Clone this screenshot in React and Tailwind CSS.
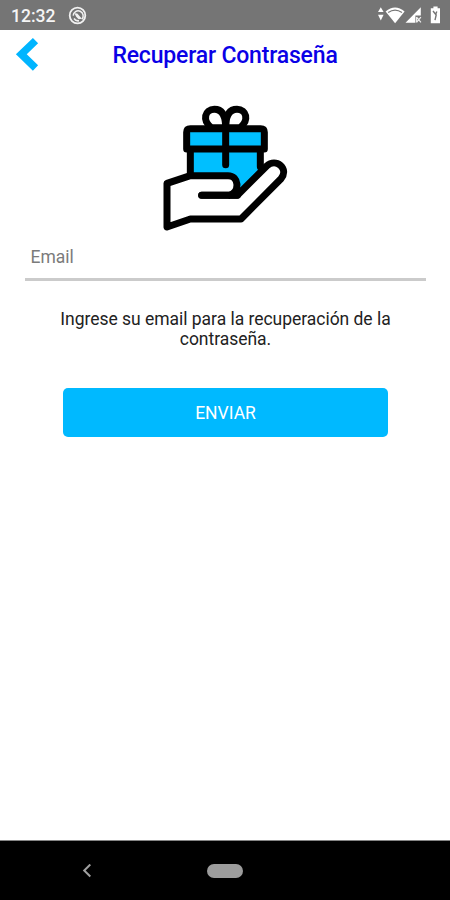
import React, { useState } from 'react';

/**
 * Android status bar
 */
const StatusBar = () => (
  <div className="h-[30px] shrink-0 bg-[#757575] flex items-center pl-[11px] pr-2 text-[#F5F5F5]">
    <span className="text-[17.5px] leading-[30px] font-medium pt-[2px]">12:32</span>
    <svg className="ml-[13px] mt-px w-[20px] h-[20px]" viewBox="0 0 20 20" fill="none" stroke="#F1F1F1">
      <circle cx="9.5" cy="9.5" r="7.8" strokeWidth="1.8" />
      <path d="M5.2 9.6a5 5 0 1 1 8.6 3.7M6 12.5a5 5 0 0 0 5 2.3" strokeWidth="1.5" />
      <path d="M6.5 7.2l2.8.4 4.6 5.2-3.3.4-2.4-2.4z" fill="#F1F1F1" stroke="none" />
    </svg>

    <svg className="ml-auto w-[66px] h-[20px]" viewBox="0 0 66 20" fill="#FFFFFF">
      {/* Data arrows */}
      <path d="M4.8 2.2l2.8 4.9H2zM4.8 15.4L2 9.7h5.6z" />
      {/* Wifi */}
      <path d="M9.6 6.6Q19 -1.4 28.6 6.6L19.1 18.2z" />
      <path d="M12.2 7.5Q19 2.6 26 7.5" fill="none" stroke="#757575" strokeWidth="1.2" />
      {/* Mobile signal */}
      <path d="M44.8 2.2v8.3h-5.4v7.2H29.5z" />
      <path d="M40.6 12.2l4.3 5.2M44.9 12.2l-4.3 5.2M40.6 12v5.6" fill="none" stroke="#EEEEEE" strokeWidth="1.2" />
      {/* Battery */}
      <path d="M54.8 3.2h2.6V1.6h4.2v1.6h2.4v15h-9.2z" />
      <path d="M57 6l3.2 4-1.2 5.2M60.8 6.6l-1.2 3" fill="none" stroke="#757575" strokeWidth="1.4" />
    </svg>
  </div>
);

/**
 * Hand holding a gift box
 */
const GiftLogo = () => (
  <svg
    className="w-[150px] h-[145px] shrink-0"
    viewBox="0 0 450 435"
    fill="none"
    stroke="#000000"
    strokeWidth="21"
    strokeLinecap="round"
    strokeLinejoin="round"
  >
    <path d="M121 162H331V220L272 292L252 242H121z" fill="#00BFFF" stroke="none" />
    <path d="M121 162V242M331 162V215" />
    <path d="M121 101H332Q343 101 343 112V162H110V112Q110 101 121 101z" fill="#00BFFF" />
    {/* Bow */}
    <path d="M184 98C156 76 164 43 193 43C216 43 227 62 227 98z" fill="#FFFFFF" />
    <path d="M270 98C298 76 290 43 261 43C238 43 227 62 227 98z" fill="#FFFFFF" />
    <path d="M227 68V209" />
    <path
      d="M155 301H262L350 213C378 187 418 221 393 251L273 372H121L51 396V265L121 242H234C267 242 271 290 238 301"
      fill="#FFFFFF"
    />
    <path d="M155 301H262" />
  </svg>
);

/**
 * Android navigation bar
 */
const NavigationBar = () => (
  <div className="h-[60px] shrink-0 bg-black border-t border-[#858585] grid grid-cols-3 items-center">
    <button type="button" aria-label="Atrás" className="pl-[82px]">
      <svg className="w-[10px] h-[14px]" viewBox="0 0 10 14" fill="none" stroke="#A0A0A0" strokeWidth="2">
        <path d="M8.3 .5L2.2 6.5l6.1 6" />
      </svg>
    </button>
    <button type="button" aria-label="Inicio" className="justify-self-center w-[36px] h-[14px] rounded-full bg-[#9C9C9C]" />
  </div>
);

function App() {
  const [email, setEmail] = useState('');

  return (
    <div className="w-[450px] h-[900px] flex flex-col overflow-hidden bg-white font-['Roboto',sans-serif]">
      <StatusBar />

      <header className="h-[50px] shrink-0 grid grid-cols-[50px_1fr_50px] items-center">
        <button type="button" aria-label="Volver" className="pl-[15px]">
          <svg className="w-[25px] h-[36px]" viewBox="0 0 25 36" fill="none" stroke="#00B5FF" strokeWidth="7.5">
            <path d="M20.5 3.6L6.3 17.3l14.2 13.7" />
          </svg>
        </button>
        <h1 className="text-center text-[23px] leading-[30px] tracking-[-0.18px] pt-px font-medium text-[#0A00E6]">
          Recuperar Contraseña
        </h1>
      </header>

      <main className="flex-1 flex flex-col items-center pt-[15px]">
        <GiftLogo />

        <input
          type="email"
          placeholder="Email"
          value={email}
          onChange={(e) => setEmail(e.target.value)}
          className="w-[401px] h-[41px] pl-[6px] pb-[5px] text-[17.5px] border-b-[3px] border-[#CBCBCB] text-[#222222] placeholder:text-[#7B7B7B] outline-none"
        />

        <p className="mt-[28px] pl-px w-[350px] text-center text-[17.5px] leading-[20px] tracking-[-0.03px] text-[#222222]">
          Ingrese su email para la recuperación de la contraseña.
        </p>

        <button
          type="button"
          className="mt-[39px] pt-[2px] pl-px w-[325px] h-[49px] rounded-[5px] bg-[#00B9FF] text-[17.5px] text-white"
        >
          ENVIAR
        </button>
      </main>

      <NavigationBar />
    </div>
  );
}

export default App;
